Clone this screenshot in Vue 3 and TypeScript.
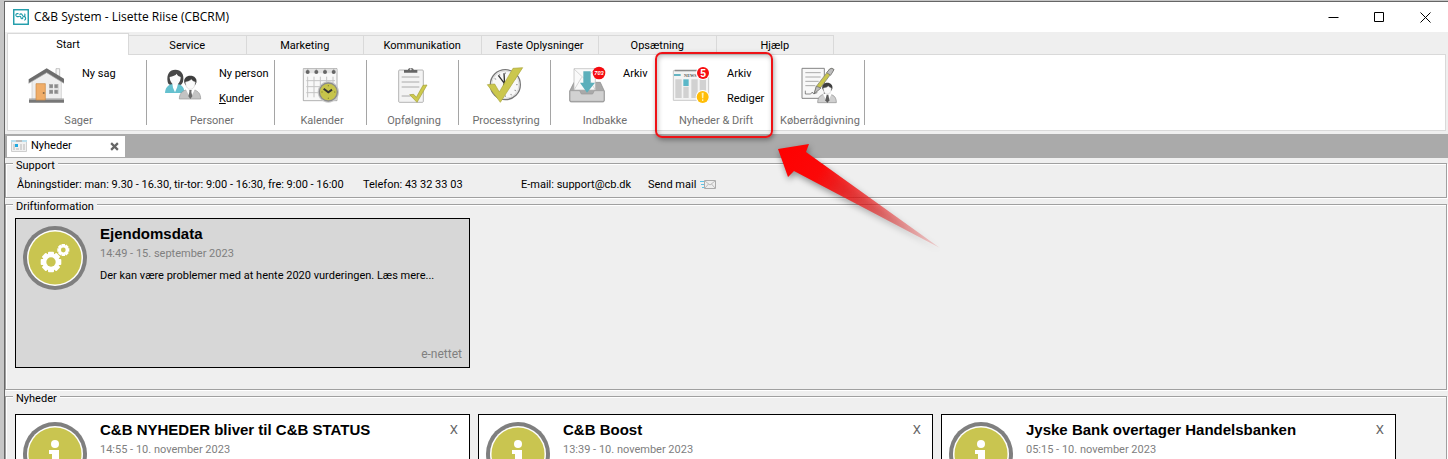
<script setup lang="ts">
import { ref } from 'vue'

interface Command { label: string; underline?: boolean }
interface Group { id: string; label: string; commands: Command[]; marked?: boolean }
interface NewsItem { title: string; date: string }

const ribbonTabs: string[] = ['Start', 'Service', 'Marketing', 'Kommunikation', 'Faste Oplysninger', 'Opsætning', 'Hjælp']
const activeTab = ref('Start')

const groups: Group[] = [
  { id: 'house', label: 'Sager', commands: [{ label: 'Ny sag' }] },
  { id: 'people', label: 'Personer', commands: [{ label: 'Ny person' }, { label: 'Kunder', underline: true }] },
  { id: 'calendar', label: 'Kalender', commands: [] },
  { id: 'clipboard', label: 'Opfølgning', commands: [] },
  { id: 'process', label: 'Processtyring', commands: [] },
  { id: 'inbox', label: 'Indbakke', commands: [{ label: 'Arkiv' }] },
  { id: 'news', label: 'Nyheder & Drift', commands: [{ label: 'Arkiv' }, { label: 'Rediger' }], marked: true },
  { id: 'advice', label: 'Køberrådgivning', commands: [] },
]

const news = ref<NewsItem[]>([
  { title: 'C&B NYHEDER bliver til C&B STATUS', date: '14:55 - 10. november 2023' },
  { title: 'C&B Boost', date: '13:39 - 10. november 2023' },
  { title: 'Jyske Bank overtager Handelsbanken', date: '05:15 - 10. november 2023' },
])

const dialMarks = Array.from({ length: 12 }, (_, i) => i * 30)
const cogTeeth = Array.from({ length: 8 }, (_, i) => i * 45)

function dismiss(item: NewsItem): void {
  news.value = news.value.filter((n) => n !== item)
}
</script>

<template>
  <div class="desktop">
    <div class="window">
      <header class="titlebar">
        <svg class="logo" viewBox="0 0 16 16" aria-hidden="true">
          <rect x="0.75" y="0.75" width="14.5" height="14.5" fill="#fff" stroke="#1a9aa8" stroke-width="1.4" />
          <path d="M5.500 4.600H4.200a1.500 1.500 0 0 0-.4 2.900c1.600.6 2.600-.8 3.600 0s.2 2.300 1.400 2.300 1-1.200 1-1.800M6.600 5.800c.6-1.300 2.400-1.300 2.700.2.200 1 .9 1.500 1.700 1.300a1.400 1.400 0 0 0 .4-2.500M11 7.400c2.200.4 2.200 3.400.2 3.800" fill="none" stroke="#1a9aa8" stroke-width="1.100" />
        </svg>
        <h1>C&amp;B System - Lisette Riise (CBCRM)</h1>
        <div class="window-buttons">
          <button type="button" aria-label="Minimer"><svg viewBox="0 0 11 11"><path d="M0.5 5.5h10" /></svg></button>
          <button type="button" aria-label="Maksimer"><svg viewBox="0 0 11 11"><path d="M0.5 0.5h9v9h-9z" /></svg></button>
          <button type="button" aria-label="Luk"><svg viewBox="0 0 11 11"><path d="M0.5 0.5l10 10M10.5 0.5l-10 10" /></svg></button>
        </div>
      </header>

      <nav class="tabs" role="tablist">
        <button
          v-for="tab in ribbonTabs"
          :key="tab"
          type="button"
          role="tab"
          class="tab"
          :class="{ active: tab === activeTab }"
          :aria-selected="tab === activeTab"
          @click="activeTab = tab"
        >{{ tab }}</button>
      </nav>

      <div class="ribbon">
        <section v-for="group in groups" :key="group.id" class="group" :class="['group-' + group.id, { solo: !group.commands.length }]">
          <div class="group-body">
            <button type="button" class="group-icon" :aria-label="group.label">
              <svg v-if="group.id === 'house'" viewBox="0 0 108 108">
                <path d="M84 2h11v26H84z" fill="#f6f6f6" stroke="#a8a8a8" stroke-width="2" />
                <path d="M12 34L56 8l44 26v60H12z" fill="#eeeeee" stroke="#c8c8c8" stroke-width="2" />
                <path d="M2 34L56 1l52 31v14L56 14 2 46z" fill="#6d6d6d" />
                <path d="M2 46L56 14l52 32" fill="none" stroke="#a5a5a5" stroke-width="2" />
                <path d="M3 92h105v12H3z" fill="#777" /><path d="M3 92h105v4H3z" fill="#a9a9a9" />
                <path d="M24 47h28v49H24z" fill="#f0ad68" stroke="#c98946" stroke-width="2" />
                <circle cx="47" cy="75" r="3" fill="#8a6a48" />
                <path d="M63 48h28v30H63z" fill="#a9a9a9" /><path d="M77 48v30M63 63h28" stroke="#eee" stroke-width="4" />
                <path d="M66 51h8v8h-8zM80 51h8v8h-8zM66 67h8v8h-8zM80 67h8v8h-8z" fill="#8b8b8b" />
              </svg>
              <svg v-else-if="group.id === 'people'" viewBox="0 0 108 108">
                <path d="M8 42C4 18 14 5 31 5s28 13 23 36c-2 8-8 9-10 12H18C15 50 9 49 8 42z" fill="#474747" />
                <path d="M0 75c1-13 6-22 19-26h22c13 4 17 13 17 26z" fill="#65c1cf" />
                <path d="M22 47h17l-3 12-6 14-6-14z" fill="#fff" />
                <path d="M14 27c9-2 18-5 21-10 2 6 7 8 12 10 0 14-8 24-16 24S14 41 14 27z" fill="#fafafa" />
                <path d="M43 93c0-16 8-24 22-28h21c14 4 21 12 21 28z" fill="#c3c3c3" stroke="#979797" stroke-width="2" />
                <path d="M62 63h28L76 91z" fill="#fff" /><path d="M73 66h7l-1 6 3 13-6 8-6-8 3-13z" fill="#696969" />
                <path d="M58 44c-3-13 6-21 18-21s21 8 18 21l-4 8H62z" fill="#3e3e3e" />
                <path d="M61 42c8-1 14-4 18-8 3 4 7 7 12 8-1 13-6 22-15 22s-14-9-15-22z" fill="#fafafa" stroke="#aaa" />
              </svg>
              <svg v-else-if="group.id === 'calendar'" viewBox="0 0 108 108">
                <path d="M1 2h101v96H1z" fill="#f8f8f8" stroke="#8d8d8d" stroke-width="2" />
                <path d="M2 3h99v13H2z" fill="#e2e2e2" />
                <path d="M14 26v62M33 26v62M52 26v62M71 26v62M90 26v62M10 38h86M10 56h86M10 74h86" stroke="#c4c4c4" stroke-width="3" fill="none" />
                <path d="M14 0v8M40 0v8M66 0v8M92 0v8" stroke="#bbb" stroke-width="4" />
                <circle v-for="x in [14, 40, 66, 92]" :key="x" :cx="x" cy="12" r="6" fill="#666" />
                <circle cx="76" cy="72" r="32" fill="#cacaca" /><circle cx="76" cy="72" r="29" fill="#8b8b8b" />
                <circle cx="76" cy="72" r="25" fill="#c7c44b" />
                <path d="M76 51v4M76 89v4M55 72h4M93 72h4" stroke="#68671f" stroke-width="2" />
                <path d="M62 62l14 11 11-8" fill="none" stroke="#333" stroke-width="6" />
              </svg>
              <svg v-else-if="group.id === 'clipboard'" viewBox="0 0 108 108">
                <rect x="11" y="6" width="74" height="97" rx="3" fill="#f3f3f3" stroke="#929292" stroke-width="2" />
                <path d="M27 14V6h12c0-8 17-8 17 0h11v8z" fill="#656565" /><circle cx="47" cy="4" r="3" fill="#ddd" />
                <path d="M20 27h53M20 42h53M20 57h53M20 84h27" stroke="#aaa" stroke-width="3" />
                <path d="M44 80l12-1 8 9 20-36 12-1-30 52z" fill="#cdc94c" stroke="#a19e36" stroke-width="2" />
              </svg>
              <svg v-else-if="group.id === 'process'" viewBox="0 0 108 108">
                <circle cx="55" cy="50" r="45" fill="#f8f8f8" stroke="#777" stroke-width="4" />
                <circle cx="55" cy="50" r="41" fill="none" stroke="#ccc" stroke-width="2" />
                <path v-for="a in dialMarks" :key="a" d="M55 13v5" stroke="#999" stroke-width="3" :transform="`rotate(${a} 55 50)`" />
                <path d="M55 50L34 22M53 50l-2-34" stroke="#343434" stroke-width="4" /><circle cx="53" cy="50" r="5" fill="#333" />
                <path d="M1 50l22-2 14 24L78 1l29-2-67 104z" fill="#cbc74d" stroke="#aaa63c" stroke-width="2" />
              </svg>
              <svg v-else-if="group.id === 'inbox'" viewBox="0 0 108 108">
                <path d="M2 69L15 43h79l12 26v29q0 4-5 4H7q-5 0-5-4z" fill="#a9a9a9" stroke="#888" stroke-width="2" />
                <path d="M15 2h64v64H15z" fill="#fafafa" stroke="#b5b5b5" stroke-width="2" />
                <path d="M15 3l32 30L79 3M15 66l23-38M79 66L57 28" fill="none" stroke="#c2c2c2" stroke-width="2" />
                <path d="M3 68h29l5 10h34l5-10h29v29q0 3-4 3H7q-4 0-4-3z" fill="#d1d1d1" stroke="#999" stroke-width="2" />
                <path d="M43 10h22v34h13L54 74 33 44h10z" fill="#5cafbb" />
                <circle cx="90" cy="15" r="19" fill="#f50b10" />
                <text x="90" y="21" text-anchor="middle" class="badge-count">703</text>
              </svg>
              <svg v-else-if="group.id === 'news'" viewBox="0 0 108 108">
                <path d="M1 8h106v89H1z" fill="#f3f3f3" stroke="#c9c9c9" stroke-width="3" /><path d="M5 5h102v5H5z" fill="#8b8b8b" />
                <path d="M3 18h20v6H3zM79 18h26v6H79z" fill="#64b4c2" />
                <text x="33" y="27" class="masthead">NEWS</text>
                <path d="M7 34h19v56H7zM31 56h16v34H31zM55 34h19v56H55zM80 34h19v56H80z" fill="#d1d1d1" />
                <path d="M31 34h16v20H31z" fill="#5bb7c8" />
                <circle cx="90" cy="15" r="21" fill="#fff" /><circle cx="90" cy="15" r="18" fill="#f70e11" />
                <text x="90" y="26" text-anchor="middle" class="badge-five">5</text>
                <circle cx="89" cy="87" r="21" fill="#fff" /><circle cx="89" cy="87" r="18" fill="#ffbd08" />
                <path d="M86 74h6l-1 17h-4zM87 94h4v5h-4z" fill="#fff2b3" />
              </svg>
              <svg v-else viewBox="0 0 108 108">
                <path d="M3 1h67v90H3z" fill="#f8f8f8" stroke="#858585" stroke-width="3" />
                <path d="M13 14h46M13 27h46M13 40h40M13 53h30" stroke="#aaa" stroke-width="3" />
                <path d="M13 68v10h16l5-6 3 5 12-3" stroke="#555" stroke-width="2" fill="none" />
                <path d="M39 78l7-23 40-52q8-6 13 2L60 58z" fill="#c9c54d" stroke="#777" stroke-width="2" />
                <path d="M46 55l14 5-21 18zM77 14l12 8 10-17q-6-7-13-2z" fill="#bdbdbd" stroke="#666" stroke-width="2" />
                <path d="M50 104c0-15 7-22 18-25h20c12 3 18 10 18 25z" fill="#cfcfcf" stroke="#8d8d8d" stroke-width="2" />
                <path d="M66 78h26l-13 25z" fill="#fff" /><path d="M77 80h5l3 17-6 8-6-8z" fill="#5c5c5c" />
                <path d="M64 62c-2-11 5-18 15-18s17 7 15 18l-4 7H68z" fill="#3e3e3e" />
                <path d="M67 60c6 0 12-3 15-6 2 3 5 5 9 6 0 11-5 18-12 18s-12-7-12-18z" fill="#fafafa" stroke="#aaa" />
              </svg>
            </button>
            <div v-if="group.commands.length" class="commands">
              <button v-for="command in group.commands" :key="command.label" type="button">
                <template v-if="command.underline"><u>{{ command.label[0] }}</u>{{ command.label.slice(1) }}</template>
                <template v-else>{{ command.label }}</template>
              </button>
            </div>
          </div>
          <h2>{{ group.label }}</h2>

          <template v-if="group.marked">
            <span class="highlight" aria-hidden="true"></span>
            <svg class="arrow" viewBox="0 0 170 120" aria-hidden="true">
              <defs>
                <linearGradient id="fade" gradientUnits="userSpaceOnUse" x1="5" y1="9" x2="167" y2="108">
                  <stop offset="0" stop-color="#ff0000" />
                  <stop offset="0.25" stop-color="#fb0808" />
                  <stop offset="1" stop-color="#e02020" stop-opacity="0.15" />
                </linearGradient>
              </defs>
              <path d="M5 9L36 4l-3 8L167 108 21 31l-6 6z" fill="url(#fade)" />
            </svg>
          </template>
        </section>
      </div>

      <div class="documents">
        <div class="document-tab">
          <svg viewBox="0 0 16 12" aria-hidden="true">
            <path d="M0.5 0.5h15v11H.5z" fill="#f1f1f1" stroke="#cfcfcf" />
            <path d="M0 0h16v2H0z" fill="#b9dfee" /><path d="M5 0h6v2H5z" fill="#bbb" />
            <path d="M2 4h2v6H2zM5 8h3v2H5zM9 4h2v6H9zM12 4h2v6h-2z" fill="#d4d4d4" /><path d="M4 4h3v3H4z" fill="#20a9e0" />
          </svg>
          <span>Nyheder</span>
          <button type="button" aria-label="Luk Nyheder"><svg viewBox="0 0 8 8"><path d="M1 1l6 6M7 1L1 7" /></svg></button>
        </div>
      </div>

      <main>
        <section class="panel support">
          <h2>Support</h2>
          <div class="support-row">
            <span>Åbningstider: man: 9.30 - 16.30, tir-tor: 9:00 - 16:30, fre: 9:00 - 16:00</span>
            <span>Telefon: 43 32 33 03</span>
            <span>E-mail: support@cb.dk</span>
            <a href="mailto:support@cb.dk">Send mail
              <svg viewBox="0 0 16 10" aria-hidden="true">
                <path d="M0 1.5h5M1 4.5h4M2 7.5h3" stroke="#5cc3e6" fill="none" />
                <path d="M4.5 0.5h11v8h-11z" fill="#eee" stroke="#aaa" /><path d="M5 1l5 4 5-4M5 8l3.500-4M15 8l-3.500-4" fill="none" stroke="#bbb" />
              </svg>
            </a>
          </div>
        </section>

        <section class="panel operations">
          <h2>Driftinformation</h2>
          <div class="cards">
            <article class="card muted">
              <svg class="emblem" viewBox="0 0 64 64" aria-hidden="true">
                <circle cx="32" cy="32" r="32" fill="#7f7f7f" /><circle cx="32" cy="32" r="28" fill="#fff" /><circle cx="32" cy="32" r="26.500" fill="#c9c550" />
                <g fill="#fff">
                  <rect v-for="a in cogTeeth" :key="'a' + a" x="25" y="25.700" width="6" height="6" rx="1" :transform="`rotate(${a} 28 36)`" />
                  <circle cx="28" cy="36" r="8.500" />
                  <rect v-for="a in cogTeeth" :key="'b' + a" x="38.500" y="18" width="3.500" height="3.500" :transform="`rotate(${a} 40.300 24)`" />
                  <circle cx="40.300" cy="24" r="4.800" />
                </g>
                <circle cx="28" cy="36" r="4.700" fill="#c9c550" /><circle cx="40.300" cy="24" r="2.400" fill="#c9c550" />
              </svg>
              <div class="card-text">
                <h3>Ejendomsdata</h3>
                <time>14:49 - 15. september 2023</time>
                <p>Der kan være problemer med at hente 2020 vurderingen. Læs mere...</p>
              </div>
              <span class="source">e-nettet</span>
            </article>
          </div>
        </section>

        <section class="panel latest">
          <h2>Nyheder</h2>
          <div class="cards">
            <article v-for="item in news" :key="item.title" class="card">
              <svg class="emblem" viewBox="0 0 64 64" aria-hidden="true">
                <circle cx="32" cy="32" r="32" fill="#7f7f7f" /><circle cx="32" cy="32" r="28" fill="#fff" /><circle cx="32" cy="32" r="26.500" fill="#c9c550" />
                <circle cx="32" cy="22" r="4" fill="#fff" /><path d="M26 28h10v15h3v4H26v-4h3V32h-3z" fill="#fff" />
              </svg>
              <div class="card-text">
                <h3>{{ item.title }}</h3>
                <time>{{ item.date }}</time>
              </div>
              <button type="button" class="dismiss" @click="dismiss(item)">X</button>
            </article>
          </div>
        </section>
      </main>
    </div>
  </div>
</template>

<style>
body { margin: 0; background: #efefef; }
</style>

<style scoped>
.desktop {
  box-sizing: border-box;
  height: 100vh;
  overflow: hidden;
  padding: 1px 0 0 4px;
  background: #c6c6c6;
  color: #000;
  font: 11px/16px Roboto, "Liberation Sans", sans-serif;
}
.window { height: 100%; border: solid #666; border-width: 1px 0 0 1px; background: #efefef; }
h1, h2, h3, p { margin: 0; font-weight: 400; font-size: inherit; }
button { padding: 0; border: 0; background: none; color: inherit; font: inherit; }
svg { display: block; }

.titlebar { display: flex; align-items: center; height: 30px; padding-left: 8px; background: #fff; }
.logo { width: 16px; height: 16px; }
.titlebar h1 { flex: 1; margin-left: 5px; font: 12px/16px "Open Sans", sans-serif; }
.window-buttons { display: flex; }
.window-buttons button { display: grid; place-items: center; width: 46px; height: 30px; }
.window-buttons svg { width: 11px; height: 11px; fill: none; stroke: #000; }

.tabs { display: flex; align-items: flex-end; width: 826px; height: 22px; padding: 0 2px; }
.tab {
  box-sizing: border-box;
  flex: 1;
  height: 19px;
  margin-right: -1px;
  padding-top: 2px;
  border: 1px solid #d9d9d9;
  border-bottom: 0;
  white-space: nowrap;
}
.tab.active { position: relative; z-index: 1; flex: 0 0 122px; height: 22px; margin-bottom: -1px; padding-top: 0; background: #fff; }

.ribbon {
  display: flex;
  height: 75px;
  margin: 0 2px 3px;
  border: 1px solid #d9d9d9;
  background: #fff;
}
.group { position: relative; box-sizing: border-box; width: 92px; padding-top: 5px; }
.group::after { content: ""; position: absolute; top: 5px; bottom: 5px; right: 0; width: 1px; background: #a5a5a5; }
.group-house { width: 139px; }
.group-people { width: 128px; }
.group-inbox { width: 106px; }
.group-news { width: 116px; }
.group-body { display: flex; gap: 18px; height: 53px; padding-left: 18px; }
.group-house .group-body { padding-left: 20px; }
.group-news .group-body { padding-left: 16px; }
.solo .group-body { justify-content: center; padding-left: 0; }
.group-icon { width: 36px; height: 36px; margin-top: 8px; }
.group-icon svg { width: 36px; height: 36px; overflow: visible; }
.commands { display: flex; flex-direction: column; gap: 9px; padding-top: 6px; }
.commands button { text-align: left; white-space: nowrap; }
.group h2 { padding-left: 2px; color: #6e6e6e; text-align: center; white-space: nowrap; }
.badge-count { fill: #fff; font: italic bold 17px "Liberation Sans", sans-serif; }
.badge-five { fill: #fff; font: bold 31px "Liberation Sans", sans-serif; }
.masthead { fill: #555; font: bold 13px "Liberation Serif", serif; }

.highlight {
  position: absolute;
  z-index: 2;
  inset: -3px 0 -8px -2px;
  border: 2px solid #ee1216;
  border-radius: 7px;
  box-shadow: 1px 2px 5px rgba(0, 0, 0, 0.35), inset 1px 2px 5px rgba(0, 0, 0, 0.25);
  pointer-events: none;
}
.arrow {
  position: absolute;
  z-index: 3;
  top: 85px;
  left: 116px;
  width: 170px;
  height: 120px;
  filter: drop-shadow(1px 3px 3px rgba(0, 0, 0, 0.4));
  pointer-events: none;
}

.documents { display: flex; align-items: center; height: 24px; padding-left: 2px; background: #aaa; }
.document-tab { display: flex; align-items: center; box-sizing: border-box; width: 118px; height: 21px; padding: 0 6px 0 4px; background: #fff; }
.document-tab svg { width: 16px; height: 12px; }
.document-tab span { flex: 1; margin-left: 4px; }
.document-tab button svg { width: 9px; height: 9px; fill: none; stroke: #666; stroke-width: 2; }

main { display: flex; flex-direction: column; gap: 6px; padding: 5px 1px 0 0; }
.panel { border: 1px solid #a0a0a0; box-shadow: 1px 1px 0 #fff, inset 1px 1px 0 #fff; }
.panel > h2 { width: fit-content; margin: -6px 0 0 7px; padding: 0 3px; background: #efefef; }
.support { height: 33px; }
.support-row { display: grid; grid-template-columns: 346px 158px 127px auto; padding: 3px 0 0 11px; white-space: nowrap; }
.support-row a { display: flex; align-items: center; gap: 4px; color: inherit; text-decoration: none; }
.support-row a svg { width: 16px; height: 10px; }
.operations { height: 184px; }
.cards { display: grid; grid-template-columns: repeat(auto-fill, 455px); gap: 8px; padding: 3px 9px; }
.latest .cards { padding-top: 7px; }
.card { display: flex; gap: 13px; box-sizing: border-box; height: 150px; padding: 7px; border: 1px solid #000; background: #fff; }
.card.muted { background: #d7d7d7; }
.emblem { flex: none; width: 64px; height: 64px; }
.card-text { flex: 1; min-width: 0; white-space: nowrap; }
.card h3 { font: bold 15px/16px "Liberation Sans", Arial, sans-serif; }
.card time { display: block; margin-top: 4px; color: #808080; }
.card p { margin-top: 6px; }
.source { align-self: flex-end; margin-left: -40px; color: #808080; font-size: 12px; line-height: 12px; white-space: nowrap; }
.dismiss { align-self: flex-start; padding: 0 4px; color: #666; font-size: 13px; }
</style>
